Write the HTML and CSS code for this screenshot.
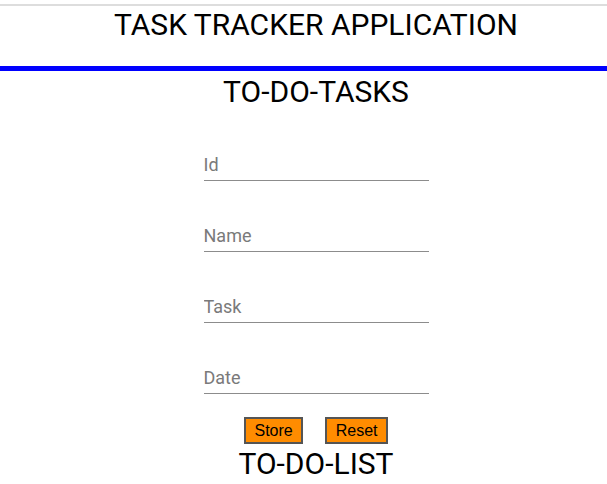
FILE: index.html
```html
<!DOCTYPE html>
<html>
<head>
<meta charset="utf-8">
<link rel="stylesheet" href="styles.css">
</head>
<body>
<div class="topline"></div>
<header class="header">
  <h1 class="title">TASK TRACKER APPLICATION</h1>
</header>
<div class="bar"></div>
<main class="main">
  <h2 class="section-title">TO-DO-TASKS</h2>
  <form class="form">
    <div class="fields">
      <input class="field" type="text" placeholder="Id">
      <input class="field" type="text" placeholder="Name">
      <input class="field" type="text" placeholder="Task">
      <input class="field" type="text" placeholder="Date">
    </div>
    <div class="actions">
      <button class="btn" type="button">Store</button>
      <button class="btn" type="reset">Reset</button>
    </div>
  </form>
  <h2 class="section-title list-title">TO-DO-LIST</h2>
</main>
</body>
</html>
```
FILE: styles.css
```css
html, body {
  margin: 0;
  padding: 0;
  background: #fff;
}
body {
  font-family: Roboto, "Noto Sans", sans-serif;
  color: #000;
  overflow: hidden;
}
.topline {
  margin-top: 4px;
  height: 2px;
  background: #dddddd;
}
.header {
  height: 60px;
  box-sizing: border-box;
  padding: 1px 0 0 25px;
}
.title {
  margin: 0;
  font-size: 30px;
  font-weight: 400;
  line-height: 35px;
  text-align: center;
}
.bar {
  height: 5px;
  background: #0000ff;
}
.main {
  padding-left: 25px;
  display: flex;
  flex-direction: column;
  align-items: center;
}
.section-title {
  margin: 3px 0 0;
  font-size: 30px;
  font-weight: 400;
  line-height: 35px;
}
.form {
  display: flex;
  flex-direction: column;
  align-items: center;
  margin-top: 43px;
}
.fields {
  display: flex;
  flex-direction: column;
  gap: 42px;
}
.field {
  width: 225px;
  box-sizing: border-box;
  border: none;
  border-bottom: 1px solid #8c8c8c;
  padding: 1px 0 5px;
  font-family: Roboto, sans-serif;
  font-size: 18px;
  line-height: 22px;
  height: 29px;
  outline: none;
  margin: 0;
  background: transparent;
}
.field::placeholder {
  color: #7a7a7a;
}
.actions {
  display: flex;
  gap: 22px;
  margin-top: 23px;
}
.btn {
  font-family: "Liberation Sans", Arial, sans-serif;
  font-size: 16px;
  background: #ff8c00;
  color: #000;
  border: 2px solid #555;
  padding: 2px 8.5px;
  line-height: 19px;
  height: 27px;
  margin: 0;
}
.list-title {
  margin-top: 1.5px;
}
```
